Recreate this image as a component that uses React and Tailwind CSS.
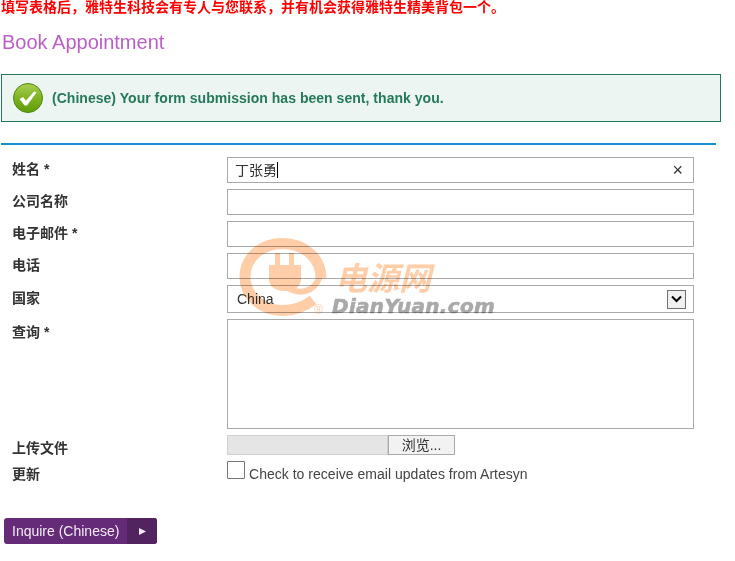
import React from "react";

function Label({ children, className = "" }) {
  return <div className={`w-[215px] shrink-0 text-[14px] leading-[20px] font-bold text-[#333] ${className}`}>{children}</div>;
}

function TextBox({ children, className = "" }) {
  return (
    <div className={`w-[467px] h-[26px] border border-[#a9a9a9] bg-white flex items-center ${className}`}>{children}</div>
  );
}

function Row({ label, children, className = "items-center", labelClass = "pb-[2px]" }) {
  return (
    <div className={`flex ${className}`}>
      <Label className={labelClass}>{label}</Label>
      {children}
    </div>
  );
}

function Watermark() {
  return (
    <div className="absolute left-[232px] top-[232px] w-[270px] h-[90px] pointer-events-none mix-blend-multiply">
      <svg width="105" height="90" viewBox="0 0 105 90" className="absolute left-0 top-0">
        <path d="M89 46 C89 26 72 11.5 50.5 11.5 C29 11.5 13 26 13 45 C13 63 29 78.5 50.5 78.5 C62 78.5 72 75 81 68" fill="none" stroke="#ffcda8" strokeWidth="11" />
        <path d="M56 56 C66 62 82 62 88 44" fill="none" stroke="#ffcda8" strokeWidth="6" />
        <path d="M37 33 H43 V21 H48 V33 H57 V21 H62 V33 H69 V47 C69 55 62 59 53 59 C44 59 37 55 37 47 Z" fill="#ffcda8" />
      </svg>
      <div className="absolute left-[82px] top-[71px] text-[12px] leading-[14px] text-[#ffcda8]">®</div>
      <div className="absolute left-[103px] top-[28px] text-[32px] leading-[32px] font-bold italic text-[#ffcda8] font-['Noto_Sans_CJK_SC',sans-serif]">电源网</div>
      <div className="absolute left-[100px] top-[64px] text-[20px] leading-[20px] font-bold italic text-[#a9a9a9] [-webkit-text-stroke:0.6px_#a9a9a9] tracking-[0.3px] font-['DejaVu_Sans',sans-serif]">DianYuan.com</div>
    </div>
  );
}

export default function App() {
  return (
    <div className="relative w-[735px] h-[561px] bg-white overflow-hidden font-['Liberation_Sans','Noto_Sans_CJK_SC',sans-serif]">
      <div className="pl-px h-[14px] text-[14px] leading-[14px] font-bold text-[#f00] whitespace-nowrap">
        填写表格后，雅特生科技会有专人与您联系，并有机会获得雅特生精美背包一个。
      </div>
      <h1 className="mt-[16px] pl-[2px] text-[20px] leading-[24px] font-normal text-[#bb5fc6]">Book Appointment</h1>

      <div className="mt-[20px] ml-px w-[720px] h-[48px] border border-[#24795a] bg-[#edf5f2] flex items-center pl-[11px]">
        <svg width="30" height="30" viewBox="0 0 30 30" className="shrink-0">
          <defs>
            <linearGradient id="g" x1="0" y1="0" x2="0" y2="1">
              <stop offset="0" stopColor="#a9cf52" />
              <stop offset="0.5" stopColor="#7fb321" />
              <stop offset="1" stopColor="#5f9c07" />
            </linearGradient>
          </defs>
          <circle cx="15" cy="15" r="14.5" fill="url(#g)" stroke="#4f8a0f" />
          <path d="M6.5 16 L10 14 L13 17.5 L21 8.5 L23.5 9.5 L14 22.5 L11.5 22.5 Z" fill="#fff" />
        </svg>
        <div className="ml-[9px] text-[14px] tracking-[0.03px] font-bold text-[#24795a]">(Chinese) Your form submission has been sent, thank you.</div>
      </div>

      <div className="mt-[21px] ml-px w-[715px] h-[2px] bg-[#1790cf]" />

      <div className="mt-[12px] pl-[12px] flex flex-col gap-[6px]">
        <Row label="姓名 *">
          <TextBox className="justify-between pl-[7px] pr-[10px]">
            <span className="text-[14px] text-[#333] flex items-center">丁张勇<span className="inline-block w-px h-[16px] bg-black" /></span>
            <span className="text-[18px] leading-none text-[#333]">×</span>
          </TextBox>
        </Row>
        <Row label="公司名称"><TextBox /></Row>
        <Row label="电子邮件 *"><TextBox /></Row>
        <Row label="电话"><TextBox /></Row>
        <Row label="国家">
          <TextBox className="h-[28px] justify-between pl-[9px] pr-[7px]">
            <span className="text-[14px] text-[#333]">China</span>
            <span className="w-[19px] h-[19px] border border-[#707070] bg-[#f0f0f0] flex items-center justify-center">
              <svg width="11" height="8" viewBox="0 0 11 8"><path d="M1 1.5 L5.5 6 L10 1.5" fill="none" stroke="#000" strokeWidth="2" /></svg>
            </span>
          </TextBox>
        </Row>
        <Row label="查询 *" className="items-start" labelClass="pt-[3px]">
          <div className="w-[467px] h-[110px] border border-[#a9a9a9] bg-white" />
        </Row>
        <Row label="上传文件" className="items-start h-[20px]" labelClass="pt-[3px]">
          <div className="flex w-[228px] h-[20px]">
            <div className="w-[161px] h-full bg-[#e5e5e5] border border-[#d0d0d0]" />
            <div className="flex-1 h-full bg-[#f2f2f2] border border-[#a9a9a9] flex items-center justify-center text-[14px] text-[#333]">浏览...</div>
          </div>
        </Row>
        <Row label="更新" className="items-start h-[19px]" labelClass="pt-[3px]">
          <div className="flex items-end h-[18px]">
            <span className="w-[18px] h-[18px] border border-[#767676] bg-white rounded-[1px]" />
            <span className="ml-[4px] text-[14px] leading-[16px] -mb-[3px] tracking-[0.02px] text-[#444]">Check to receive email updates from Artesyn</span>
          </div>
        </Row>
      </div>

      <div className="mt-[38px] ml-[4px] w-[153px] h-[26px] rounded-[3px] bg-[#652a78] flex overflow-hidden text-white">
        <div className="w-[123px] flex items-center pl-[8px] text-[14px] text-[#f3ecf5]">Inquire (Chinese)</div>
        <div className="flex-1 bg-[#52245f] flex items-center justify-center">
          <svg width="7" height="7" viewBox="0 0 7 7"><path d="M0 0 L7 3.5 L0 7 Z" fill="#f3ecf5" /></svg>
        </div>
      </div>

      <Watermark />
    </div>
  );
}
